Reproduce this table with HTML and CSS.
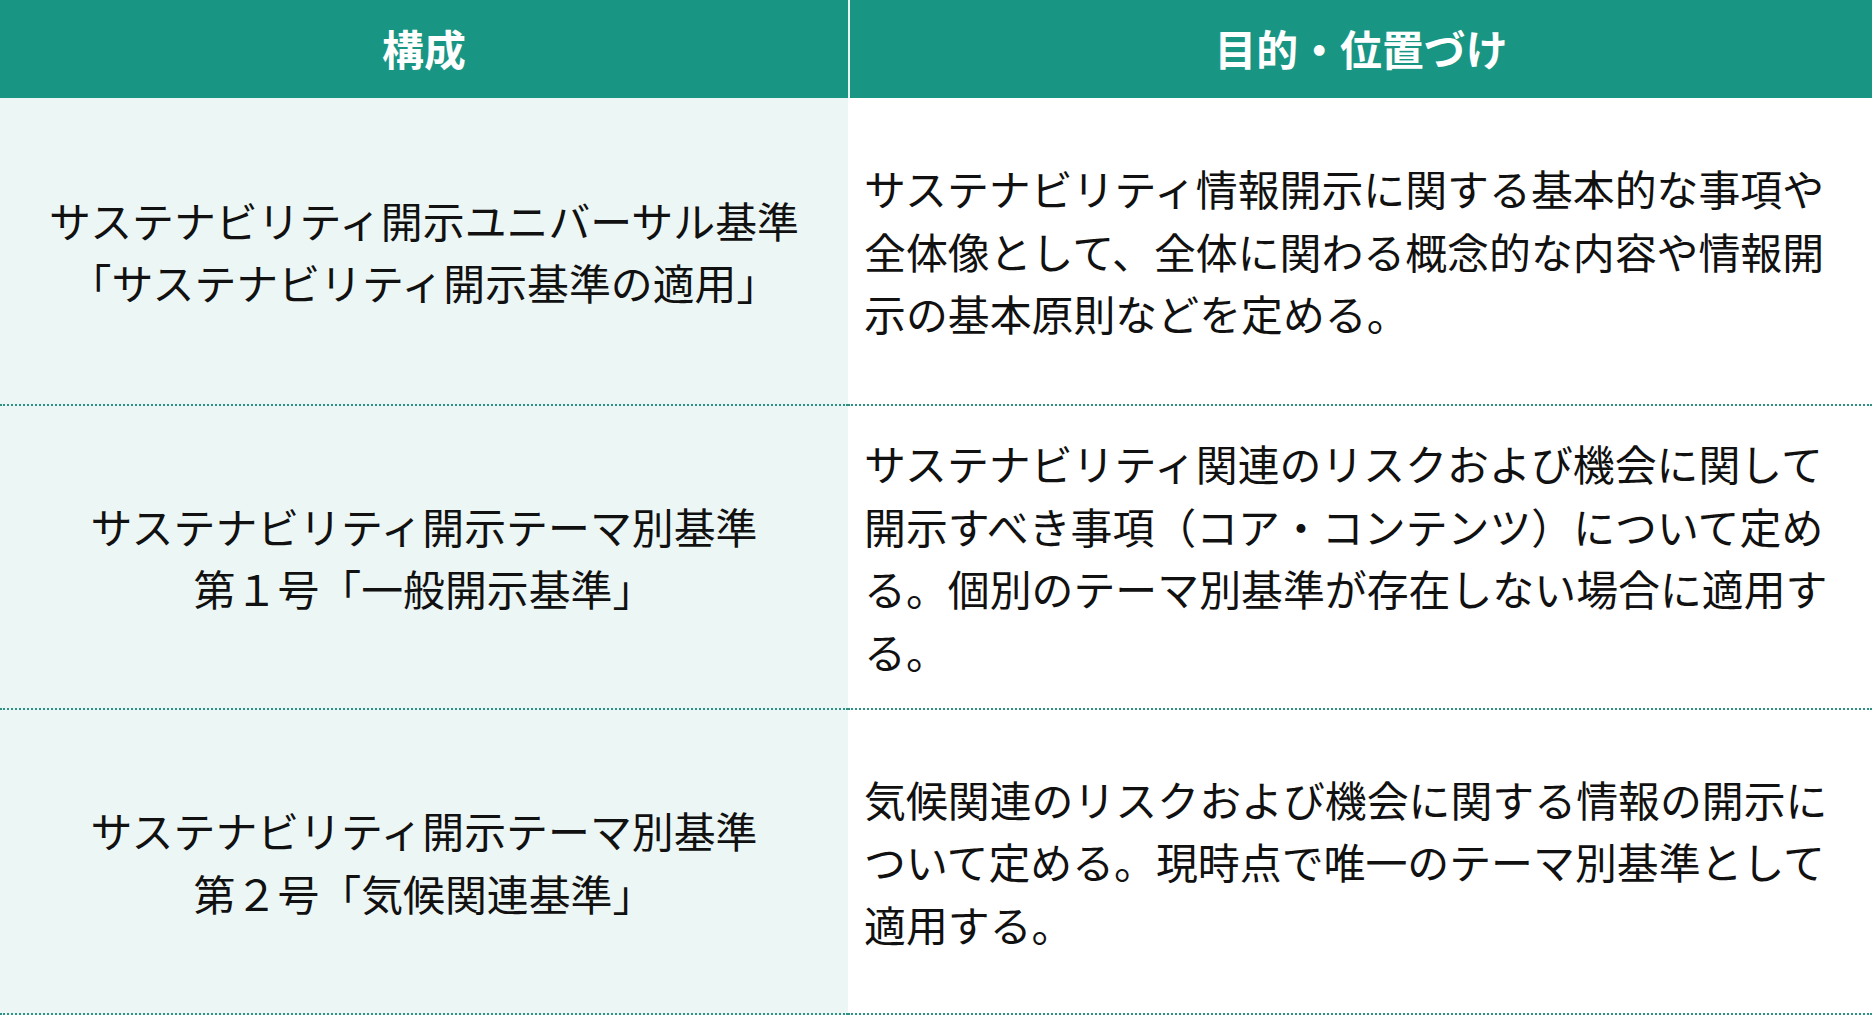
FILE: index.html
```html
<!DOCTYPE html>
<html lang="ja">
<head>
<meta charset="utf-8">
<title>サステナビリティ開示基準の構成</title>
<link rel="stylesheet" href="styles.css">
</head>
<body>
<div class="table">
  <div class="cell head">構成</div>
  <div class="cell head head-right">目的・位置づけ</div>

  <div class="cell name">サステナビリティ開示ユニバーサル基準<br>「サステナビリティ開示基準の適用」</div>
  <div class="cell desc">サステナビリティ情報開示に関する基本的な事項や全体像として、全体に関わる概念的な内容や情報開示の基本原則などを定める。</div>

  <div class="cell name">サステナビリティ開示テーマ別基準<br>第１号「一般開示基準」</div>
  <div class="cell desc">サステナビリティ関連のリスクおよび機会に関して開示すべき事項（コア・コンテンツ）について定める。個別のテーマ別基準が存在しない場合に適用する。</div>

  <div class="cell name">サステナビリティ開示テーマ別基準<br>第２号「気候関連基準」</div>
  <div class="cell desc">気候関連のリスクおよび機会に関する情報の開示について定める。現時点で唯一のテーマ別基準として適用する。</div>
</div>
</body>
</html>
```

FILE: styles.css
```css
html, body {
  margin: 0;
  padding: 0;
  background: #ffffff;
}

body {
  font-family: "Noto Sans CJK JP", "Noto Sans", sans-serif;
  color: #111111;
  overflow: hidden;
}

.table {
  width: 1872px;
  display: grid;
  grid-template-columns: 848px 1024px;
  grid-template-rows: 98px 308px 304px 305px;
}

.cell {
  box-sizing: border-box;
  display: flex;
  align-items: center;
  font-size: 41.9px;
  line-height: 62.5px;
}

.head {
  background: #199683;
  color: #ffffff;
  font-weight: 700;
  justify-content: center;
  padding-bottom: 2px;
}

.head-right {
  border-left: 2px solid #e9f4f2;
}

.name {
  background: #ecf6f4;
  justify-content: center;
  text-align: center;
  border-bottom: 2px dotted #2b9384;
}

.desc {
  background: #ffffff;
  padding: 0 20px 0 16px;
  border-bottom: 2px dotted #2b9384;
}
```
